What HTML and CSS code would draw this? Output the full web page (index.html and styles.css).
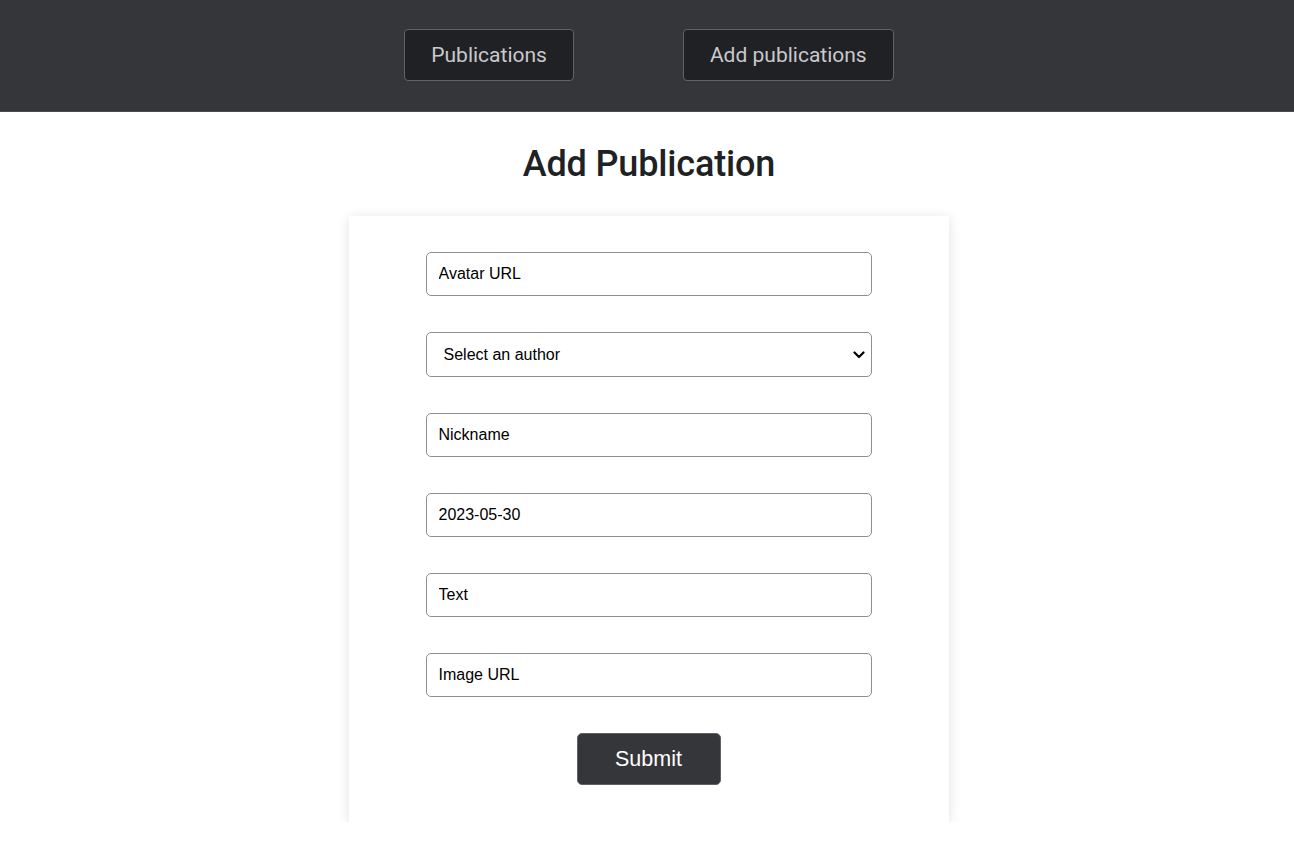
FILE: index.html
```html
<!DOCTYPE html>
<html lang="en">
<head>
<meta charset="utf-8">
<title>Add Publication</title>
<link rel="stylesheet" href="styles.css">
</head>
<body>
<header class="topbar">
  <nav class="nav">
    <a class="nav-btn" href="#">Publications</a>
    <a class="nav-btn" href="#">Add publications</a>
  </nav>
</header>
<main class="main">
  <h1 class="title">Add Publication</h1>
  <form class="card">
    <input class="field" type="text" placeholder="Avatar URL">
    <div class="select-wrap">
      <select class="field select">
        <option>Select an author</option>
      </select>
      <svg class="chev" width="12" height="8" viewBox="0 0 12 8" aria-hidden="true"><path d="M1.5 1.5 L6 6 L10.5 1.5" fill="none" stroke="#000" stroke-width="2.2" stroke-linecap="round" stroke-linejoin="round"/></svg>
    </div>
    <input class="field" type="text" placeholder="Nickname">
    <input class="field" type="text" value="2023-05-30">
    <input class="field" type="text" placeholder="Text">
    <input class="field" type="text" placeholder="Image URL">
    <button class="submit" type="button">Submit</button>
  </form>
</main>
</body>
</html>
```

FILE: styles.css
```css
html, body {
  margin: 0;
  padding: 0;
  background: #ffffff;
}
body {
  font-family: Roboto, "Liberation Sans", sans-serif;
}
.topbar {
  background: #35363a;
  height: 111px;
  border-bottom: 1px solid #4b4c50;
  display: flex;
  align-items: center;
  justify-content: center;
}
.nav {
  display: flex;
  gap: 109px;
  margin-left: 4px;
  margin-top: -2px;
}
.nav-btn {
  display: flex;
  align-items: center;
  justify-content: center;
  box-sizing: border-box;
  height: 52px;
  padding: 0 26px;
  background: #202124;
  border: 1px solid #5f6368;
  border-radius: 4px;
  color: #c9cacc;
  font-size: 21px;
  text-decoration: none;
}
.main {
  display: flex;
  flex-direction: column;
  align-items: center;
}
.title {
  margin: 30px 0 30px 4px;
  font-size: 36px;
  font-weight: 500;
  color: #202124;
  line-height: 44px;
  letter-spacing: -0.15px;
}
.card {
  box-sizing: border-box;
  width: 600px;
  margin-left: 3px;
  padding: 36px 77px 36px;
  display: flex;
  flex-direction: column;
  align-items: center;
  gap: 36px;
  background: #fff;
  box-shadow: 0 2px 12px rgba(0, 0, 0, 0.12);
}
.field {
  box-sizing: border-box;
  width: 446px;
  height: 44px;
  padding: 0 12px;
  border: 1px solid #8f8f8f;
  border-radius: 5px;
  font-family: Arial, "Liberation Sans", sans-serif;
  font-size: 16px;
  color: #000;
  background: #fff;
  outline: none;
}
.field::placeholder {
  color: #000;
  opacity: 1;
}
.select-wrap {
  position: relative;
  width: 446px;
  height: 45px;
}
.select {
  height: 45px;
  padding-left: 17px;
  appearance: none;
  -webkit-appearance: none;
}
.chev {
  position: absolute;
  right: 7px;
  top: 19px;
  pointer-events: none;
}
.submit {
  width: 144px;
  height: 52px;
  margin-top: 0;
  margin-bottom: 1px;
  background: #35363a;
  color: #fff;
  border: 1px solid #5f6368;
  border-radius: 5px;
  font-family: Arial, "Liberation Sans", sans-serif;
  font-size: 21.5px;
}
```
